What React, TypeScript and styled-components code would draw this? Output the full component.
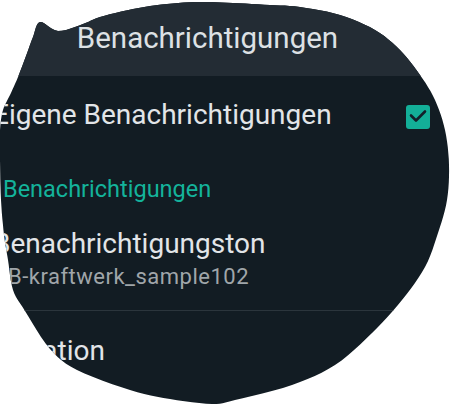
import styled, { createGlobalStyle } from "styled-components";

const Global = createGlobalStyle`
    html, body {
        margin: 0;
        padding: 0;
        background: #ffffff;
    }
    body {
        font-family: Roboto, "Noto Sans", sans-serif;
    }
`;

// outline of the visible screen area, smoothed with a closed catmull-rom spline
const pts: number[][] = [
    [40, 22], [58, 31], [83, 24], [100, 17], [133, 9], [167, 4], [200, 2],
    [233, 3], [270, 5], [300, 7], [340, 15], [375, 30], [400, 50], [420, 75],
    [435, 100], [445, 130], [449, 165], [447, 200], [438, 233], [425, 267],
    [402, 300], [372, 333], [335, 365], [292, 385], [235, 400], [212, 404],
    [170, 399], [130, 390], [77, 370], [50, 349], [25, 311], [13, 290], [8, 260],
    [4, 235], [1, 200], [0, 160], [0, 130], [3, 110], [10, 95], [18, 77],
    [26, 56], [33, 37],
];

const smooth = (p: number[][], steps = 6) => {
    const out: string[] = [];
    const n = p.length;
    for (let i = 0; i < n; i++) {
        const p0 = p[(i - 1 + n) % n], p1 = p[i], p2 = p[(i + 1) % n], p3 = p[(i + 2) % n];
        for (let s = 0; s < steps; s++) {
            const t = s / steps, t2 = t * t, t3 = t2 * t;
            const f = (a: number, b: number, c: number, d: number) =>
                0.5 * (2 * b + (-a + c) * t + (2 * a - 5 * b + 4 * c - d) * t2 + (-a + 3 * b - 3 * c + d) * t3);
            out.push(`${f(p0[0], p1[0], p2[0], p3[0]).toFixed(1)}px ${f(p0[1], p1[1], p2[1], p3[1]).toFixed(1)}px`);
        }
    }
    return out.join(", ");
};

const Screen = styled.div`
    width: 450px;
    height: 404px;
    overflow: hidden;
    background: #121c23;
    clip-path: polygon(${smooth(pts)});
    display: flex;
    flex-direction: column;
`;

const Header = styled.header`
    height: 76px;
    flex-shrink: 0;
    background: #232c34;
    display: flex;
    align-items: center;
    justify-content: center;
    padding-right: 35px;
    color: #dde1e4;
    font-size: 29.5px;
    line-height: 32px;
`;

const List = styled.div`
    display: flex;
    flex-direction: column;
    margin-left: -7px;
`;

const Row = styled.div<{ $h: number; $pt?: number; $divider?: boolean }>`
    height: ${(p) => p.$h}px;
    box-sizing: border-box;
    padding-top: ${(p) => p.$pt ?? 0}px;
    padding-right: 20px;
    display: flex;
    align-items: ${(p) => (p.$pt !== undefined ? "flex-start" : "center")};
    justify-content: space-between;
    border-bottom: ${(p) => (p.$divider ? "1px solid #2b353c" : "none")};
`;

const Texts = styled.div`
    display: flex;
    flex-direction: column;
    gap: 4px;
`;

const Title = styled.span`
    color: #e2e5e8;
    font-size: 28px;
    line-height: 32px;
    white-space: nowrap;
`;

const Sub = styled.span`
    color: #a0a6aa;
    font-size: 22px;
    letter-spacing: 0.5px;
    line-height: 26px;
    white-space: nowrap;
    padding-left: 15px;
`;

const SectionTitle = styled.div`
    height: 70px;
    display: flex;
    align-items: center;
    padding-left: 10px;
    color: #14b39b;
    font-size: 23.5px;
    line-height: 28px;
`;

const Check = styled.div`
    width: 24px;
    height: 24px;
    border-radius: 3px;
    background: #13af98;
    display: flex;
    align-items: center;
    justify-content: center;
    margin-top: 3px;
`;

export default function App() {
    return (
        <>
            <Global />
            <Screen>
                <Header>Benachrichtigungen</Header>
                <List>
                    <Row $h={78}>
                        <Title>Eigene Benachrichtigungen</Title>
                        <Check>
                            <svg width="24" height="24" viewBox="0 0 24 24">
                                <polyline
                                    points="5,10.5 10,15.5 19,6.5"
                                    fill="none"
                                    stroke="#13202a"
                                    strokeWidth="2.6"
                                    strokeLinecap="round"
                                    strokeLinejoin="round"
                                />
                            </svg>
                        </Check>
                    </Row>
                    <SectionTitle>Benachrichtigungen</SectionTitle>
                    <Row $h={87} $pt={4} $divider>
                        <Texts>
                            <Title>Benachrichtigungston</Title>
                            <Sub>B-kraftwerk_sample102</Sub>
                        </Texts>
                    </Row>
                    <Row $h={80} $pt={24}>
                        <Title>Vibration</Title>
                    </Row>
                </List>
            </Screen>
        </>
    );
}
